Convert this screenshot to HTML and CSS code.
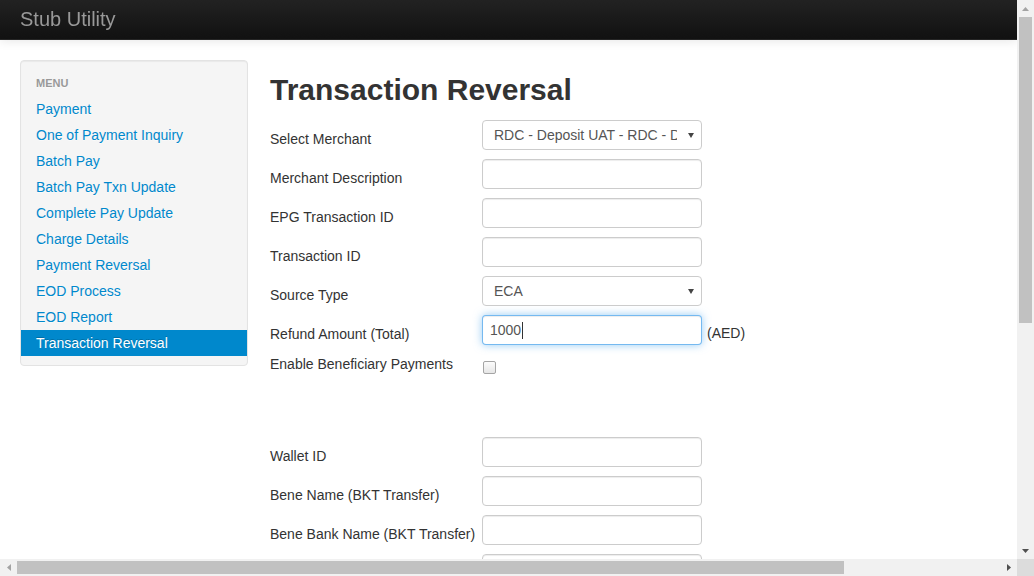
FILE: index.html
```html
<!DOCTYPE html>
<html lang="en">
<head>
<meta charset="utf-8">
<title>Stub Utility - Transaction Reversal</title>
<link rel="stylesheet" href="styles.css">
</head>
<body>
<div class="navbar">
  <div class="navbar-inner">
    <a class="brand" href="#">Stub Utility</a>
  </div>
</div>

<div class="container">
  <div class="layout">
    <aside class="sidebar">
      <ul class="nav-list">
        <li class="nav-header">Menu</li>
        <li><a href="#">Payment</a></li>
        <li><a href="#">One of Payment Inquiry</a></li>
        <li><a href="#">Batch Pay</a></li>
        <li><a href="#">Batch Pay Txn Update</a></li>
        <li><a href="#">Complete Pay Update</a></li>
        <li><a href="#">Charge Details</a></li>
        <li><a href="#">Payment Reversal</a></li>
        <li><a href="#">EOD Process</a></li>
        <li><a href="#">EOD Report</a></li>
        <li class="active"><a href="#">Transaction Reversal</a></li>
      </ul>
    </aside>

    <main class="main">
      <h1 class="title">Transaction Reversal</h1>
      <form class="form-grid">
        <label class="lbl">Select Merchant</label>
        <div class="ctl"><span class="select-wrap"><select class="field"><option>RDC - Deposit UAT - RDC - Deposit UAT</option></select></span></div>

        <label class="lbl">Merchant Description</label>
        <div class="ctl"><input class="field" type="text"></div>

        <label class="lbl">EPG Transaction ID</label>
        <div class="ctl"><input class="field" type="text"></div>

        <label class="lbl">Transaction ID</label>
        <div class="ctl"><input class="field" type="text"></div>

        <label class="lbl">Source Type</label>
        <div class="ctl"><span class="select-wrap"><select class="field"><option>ECA</option></select></span></div>

        <label class="lbl">Refund Amount (Total)</label>
        <div class="ctl"><span class="field focused fake-input">1000<span class="caret"></span></span><span class="unit">(AED)</span></div>

        <label class="lbl lbl-check">Enable Beneficiary Payments</label>
        <div class="ctl ctl-check"><span class="checkbox"></span></div>

        <label class="lbl">Wallet ID</label>
        <div class="ctl"><input class="field" type="text"></div>

        <label class="lbl">Bene Name (BKT Transfer)</label>
        <div class="ctl"><input class="field" type="text"></div>

        <label class="lbl">Bene Bank Name (BKT Transfer)</label>
        <div class="ctl"><input class="field" type="text"></div>

        <div></div>
        <div class="ctl"><input class="field" type="text"></div>
      </form>
    </main>
  </div>
</div>

<div class="scrollbar scrollbar-v">
  <span class="sb-btn"><svg width="7" height="4" viewBox="0 0 7 4"><path d="M0 4 L3.5 0 L7 4 Z" fill="#a3a3a3"/></svg></span>
  <span class="sb-track"><span class="sb-thumb"></span></span>
  <span class="sb-btn"><svg width="7" height="4" viewBox="0 0 7 4"><path d="M0 0 L7 0 L3.5 4 Z" fill="#505050"/></svg></span>
</div>
<div class="scrollbar scrollbar-h">
  <span class="sb-btn"><svg width="4" height="7" viewBox="0 0 4 7"><path d="M4 0 L4 7 L0 3.5 Z" fill="#a3a3a3"/></svg></span>
  <span class="sb-track"><span class="sb-thumb"></span></span>
  <span class="sb-btn"><svg width="4" height="7" viewBox="0 0 4 7"><path d="M0 0 L4 3.5 L0 7 Z" fill="#505050"/></svg></span>
</div>
<div class="scrollbar-corner"></div>
</body>
</html>
```

FILE: styles.css
```css
html {
  background: #fff;
  overflow: hidden;
}
body {
  margin: 0;
  padding: 60px 17px 0 0;
  height: 576px;
  overflow: hidden;
  box-sizing: border-box;
  font-family: "Liberation Sans", Arial, Helvetica, sans-serif;
  font-size: 14px;
  line-height: 20px;
  color: #333;
  background: #fff;
}

/* Window scrollbars (browser chrome drawn over the page) */
.scrollbar {
  position: fixed;
  display: flex;
  background: #f1f1f1;
  z-index: 20;
}
.scrollbar-v {
  top: 0;
  right: 0;
  width: 17px;
  height: 559px;
  flex-direction: column;
}
.scrollbar-h {
  left: 0;
  bottom: 0;
  width: 1017px;
  height: 17px;
  flex-direction: row;
}
.sb-btn {
  flex: 0 0 17px;
  width: 17px;
  height: 17px;
  display: flex;
  align-items: center;
  justify-content: center;
}
.sb-btn svg {
  display: block;
}
.sb-track {
  flex: 1;
  display: flex;
}
.scrollbar-v .sb-track {
  flex-direction: column;
  padding: 0 2px;
}
.scrollbar-h .sb-track {
  padding: 2px 0;
}
.sb-thumb {
  background: #c1c1c1;
}
.scrollbar-v .sb-thumb {
  height: 306px;
}
.scrollbar-h .sb-thumb {
  width: 827px;
}
.scrollbar-corner {
  position: fixed;
  right: 0;
  bottom: 0;
  width: 17px;
  height: 17px;
  background: #dcdcdc;
  z-index: 20;
}

/* Navbar */
.navbar {
  position: fixed;
  top: 0;
  left: 0;
  right: 17px;
  z-index: 10;
}
.navbar-inner {
  height: 40px;
  padding: 0 20px;
  background: linear-gradient(to bottom, #222222, #111111);
  border-bottom: 1px solid #252525;
  box-sizing: border-box;
  box-shadow: 0 1px 10px rgba(0, 0, 0, 0.1);
  display: flex;
  align-items: center;
}
.brand {
  font-size: 20px;
  line-height: 20px;
  color: #999;
  text-decoration: none;
  padding-bottom: 1px;
}

/* Layout */
.container {
  padding: 0 20px;
}
.layout {
  display: grid;
  grid-template-columns: 228px 1fr;
  column-gap: 22px;
  align-items: start;
}

/* Sidebar */
.sidebar {
  background: #f5f5f5;
  border: 1px solid #e3e3e3;
  border-radius: 4px;
  box-shadow: inset 0 1px 1px rgba(0, 0, 0, 0.05);
  padding: 9px 0;
}
.nav-list {
  list-style: none;
  margin: 0;
  padding: 0;
}
.nav-header {
  padding: 3px 15px;
  font-size: 11px;
  font-weight: bold;
  line-height: 20px;
  color: #999;
  text-transform: uppercase;
  text-shadow: 0 1px 0 rgba(255, 255, 255, 0.5);
}
.nav-list a {
  display: block;
  padding: 3px 15px;
  color: #0088cc;
  text-decoration: none;
  text-shadow: 0 1px 0 rgba(255, 255, 255, 0.5);
}
.nav-list .active a {
  background: #0088cc;
  color: #fff;
  text-shadow: 0 -1px 0 rgba(0, 0, 0, 0.2);
}

/* Main */
.title {
  margin: 10px 0;
  font-size: 30px;
  line-height: 40px;
  font-weight: bold;
  color: #333;
}
.form-grid {
  display: grid;
  grid-template-columns: 212px auto;
  row-gap: 9px;
  justify-content: start;
  margin: 0;
}
.lbl {
  padding-top: 9px;
  white-space: nowrap;
  color: #333;
}
.ctl {
  display: flex;
  align-items: flex-start;
}
.field {
  width: 220px;
  height: 30px;
  box-sizing: border-box;
  padding: 4px 7px;
  border: 1px solid #ccc;
  border-radius: 4px;
  background: #fff;
  font-family: inherit;
  font-size: 14px;
  color: #555;
  box-shadow: inset 0 1px 1px rgba(0, 0, 0, 0.075);
  margin: 0;
  outline: none;
}
.fake-input {
  display: flex;
  align-items: center;
  padding: 0 7px;
  line-height: 20px;
}
.field.focused {
  border-color: rgba(82, 168, 236, 0.8);
  box-shadow: inset 0 1px 1px rgba(0, 0, 0, 0.075), 0 0 8px rgba(82, 168, 236, 0.6);
}
.caret {
  display: inline-block;
  width: 1px;
  height: 17px;
  margin-left: 1px;
  background: #333;
}
.select-wrap {
  position: relative;
  display: inline-block;
}
select.field {
  appearance: none;
  -webkit-appearance: none;
  padding: 4px 24px 4px 11px;
  color: #555;
  box-shadow: none;
}
.select-wrap::after {
  content: "";
  position: absolute;
  right: 8px;
  top: 13px;
  border-left: 3px solid transparent;
  border-right: 3px solid transparent;
  border-top: 5px solid #444;
  pointer-events: none;
}
.unit {
  margin: 8px 0 0 5px;
  color: #333;
}
.lbl-check {
  padding-top: 0;
}
.ctl-check {
  height: 74px;
}
.checkbox {
  width: 13px;
  height: 13px;
  box-sizing: border-box;
  margin: 7px 0 0 1px;
  border: 1px solid #a5a5a5;
  border-radius: 2px;
  background: linear-gradient(to bottom, #fcfcfc, #e6e6e6);
}
```
